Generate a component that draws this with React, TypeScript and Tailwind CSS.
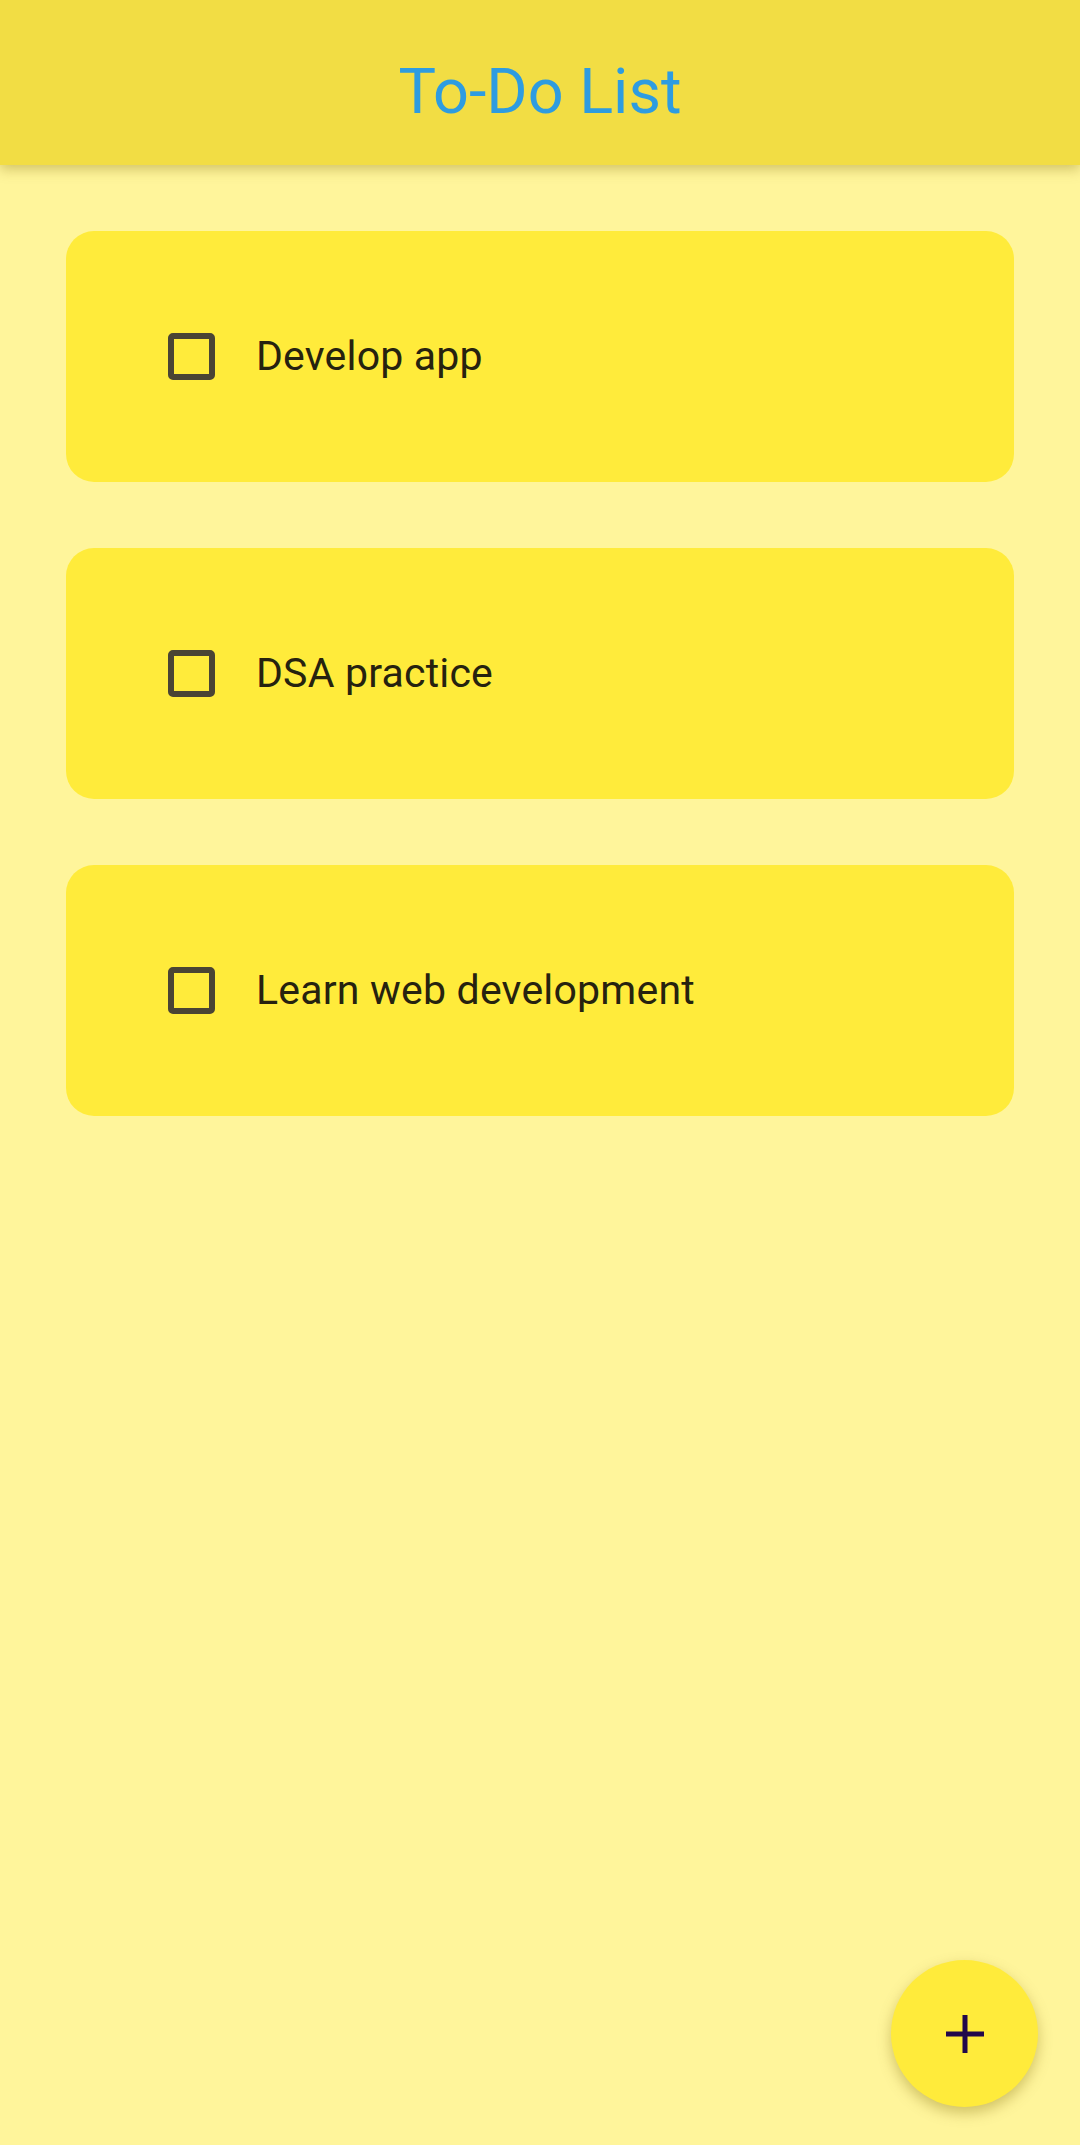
const todos = ['Develop app', 'DSA practice', 'Learn web development'];

function TodoCard({ title }: { title: string }) {
  return (
    <div className="flex h-[251px] items-center rounded-[28px] bg-[#ffeb3b] pl-[102px]">
      <span className="block h-[47px] w-[47px] shrink-0 rounded-[5px] border-[6px] border-[#4a4434]" />
      <span className="ml-[41px] text-[41px] leading-none tracking-[0.2px] text-[#26220f]">{title}</span>
    </div>
  );
}

export default function App() {
  return (
    <div
      className="relative h-[2145px] overflow-hidden bg-[#fff59b]"
      style={{ fontFamily: 'Roboto, "Noto Sans", sans-serif' }}
    >
      <header className="relative z-10 flex h-[165px] items-center justify-center bg-[#f2dd44] pt-[17px] shadow-[0_4px_12px_rgba(120,100,0,0.35)]">
        <h1 className="text-[63px] leading-none font-normal text-[#2e9ce0]">To-Do List</h1>
      </header>

      <main className="flex flex-col gap-[66px] px-[66px] pt-[66px]">
        {todos.map((todo) => (
          <TodoCard key={todo} title={todo} />
        ))}
      </main>

      <button
        type="button"
        className="absolute right-[42px] bottom-[38px] flex h-[147px] w-[147px] items-center justify-center rounded-full bg-[#ffeb3b] shadow-[0_6px_14px_rgba(120,100,0,0.35)]"
      >
        <svg width="38" height="38" viewBox="0 0 38 38">
          <rect x="0" y="16.5" width="38" height="5" fill="#22084a" />
          <rect x="16.5" y="0" width="5" height="38" fill="#22084a" />
        </svg>
      </button>
    </div>
  );
}
